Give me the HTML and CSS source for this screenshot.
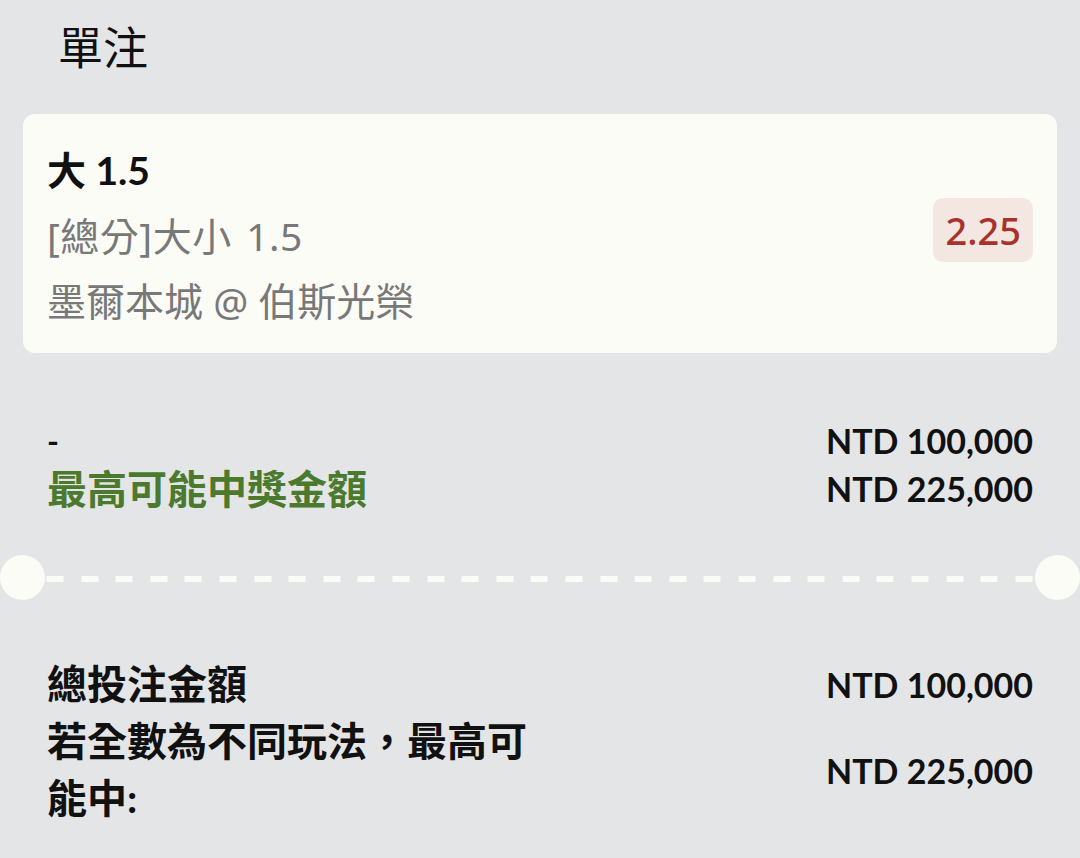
FILE: index.html
```html
<!DOCTYPE html>
<html lang="zh-Hant">
<head>
<meta charset="utf-8">
<title>單注</title>
<link rel="stylesheet" href="styles.css">
</head>
<body>
<div class="page">
  <h1 class="title">單注</h1>

  <div class="card">
    <div class="card-info">
      <div class="sel">大 1.5</div>
      <div class="market">[總分]大小 1.5</div>
      <div class="match">墨爾本城 @ 伯斯光榮</div>
    </div>
    <div class="odds">2.25</div>
  </div>

  <div class="summary">
    <div class="row">
      <span class="label dash">-</span>
      <span class="amount">NTD 100,000</span>
    </div>
    <div class="row">
      <span class="label green">最高可能中獎金額</span>
      <span class="amount">NTD 225,000</span>
    </div>
  </div>

  <div class="divider">
    <span class="notch"></span>
    <span class="dashes"></span>
    <span class="notch"></span>
  </div>

  <div class="totals">
    <div class="row">
      <span class="label">總投注金額</span>
      <span class="amount">NTD 100,000</span>
    </div>
    <div class="row">
      <span class="label wrap">若全數為不同玩法，最高可能中:</span>
      <span class="amount">NTD 225,000</span>
    </div>
  </div>
</div>
</body>
</html>
```

FILE: styles.css
```css
* { box-sizing: border-box; }

html, body {
  margin: 0;
  padding: 0;
  background: #e4e5e7;
}

body {
  font-family: Lato, "Noto Sans CJK TC", sans-serif;
  color: #111;
}

.page {
  width: 1080px;
  height: 858px;
  overflow: hidden;
}

.title {
  margin: 0;
  padding: 13px 0 0 58px;
  font-family: "Noto Sans CJK TC", sans-serif;
  font-size: 45px;
  font-weight: 400;
  line-height: 66px;
  color: #111;
}

.card {
  margin: 35px 23px 0 23px;
  background: #fcfcf6;
  border-radius: 12px;
  padding: 24px 24px 20px 24px;
  display: flex;
  align-items: center;
  justify-content: space-between;
}

.card-info {
  display: flex;
  flex-direction: column;
}

.sel {
  font-size: 39px;
  font-weight: 700;
  line-height: 65px;
  color: #111;
}

.market, .match {
  font-family: "Noto Sans", "Noto Sans CJK TC", sans-serif;
  font-size: 39px;
  font-weight: 400;
  line-height: 65px;
  color: #787878;
}

.market {
  word-spacing: 4px;
  letter-spacing: 0.5px;
}

.odds {
  margin-bottom: 12px;
  background: #f4e7e2;
  color: #a7342a;
  font-family: "Noto Sans", sans-serif;
  font-size: 38px;
  font-weight: 500;
  line-height: 64px;
  padding: 0 12px;
  border-radius: 10px;
}

.summary {
  padding: 64px 47px 0 47px;
}

.summary .row {
  display: flex;
  justify-content: space-between;
  align-items: center;
  line-height: 48px;
}

.row .label {
  font-size: 40px;
  font-weight: 700;
}

.row .label.dash {
  font-size: 32px;
}

.row .amount {
  font-size: 34px;
  font-weight: 700;
  white-space: nowrap;
}

.label.green {
  color: #4b7a2f;
}

.divider {
  margin-top: 41px;
  display: flex;
  align-items: center;
  height: 46px;
}

.notch {
  flex: 0 0 45px;
  height: 45px;
  border-radius: 50%;
  background: #fcfcf6;
}

.dashes {
  flex: 1;
  height: 6px;
  margin-top: 3px;
  background-image: repeating-linear-gradient(to right, #fcfcf6 0 17px, transparent 17px 34.6px);
  background-position: 1.5px 0;
}

.totals {
  padding: 56px 47px 0 47px;
}

.totals .row {
  display: flex;
  justify-content: space-between;
  align-items: center;
  line-height: 57px;
}

.label.wrap {
  width: 500px;
}
```
